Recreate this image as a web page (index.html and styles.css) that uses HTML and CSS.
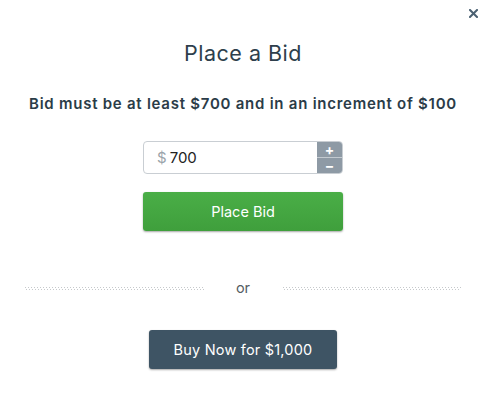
FILE: index.html
```html
<!DOCTYPE html>
<html>
<head>
<meta charset="utf-8">
<link rel="stylesheet" href="styles.css">
</head>
<body>
<div class="modal">
  <button class="close" aria-label="Close">
    <svg width="9" height="9" viewBox="0 0 9 9"><path d="M1 1L8 8M8 1L1 8" stroke="#4b6172" stroke-width="2" stroke-linecap="square"/></svg>
  </button>
  <h1 class="title">Place a Bid</h1>
  <p class="rule">Bid must be at least $700 and in an increment of $100</p>
  <div class="bid-form">
    <div class="amount">
      <span class="currency">$</span>
      <span class="value">700</span>
      <div class="stepper">
        <span class="step">+</span>
        <span class="step minus">&minus;</span>
      </div>
    </div>
    <button class="btn btn-green">Place Bid</button>
  </div>
  <div class="divider">
    <span class="dots"></span>
    <span class="or">or</span>
    <span class="dots"></span>
  </div>
  <div class="buy">
    <button class="btn btn-dark">Buy Now for $1,000</button>
  </div>
</div>
</body>
</html>
```
FILE: styles.css
```css
* { box-sizing: border-box; }
html, body { margin: 0; padding: 0; background: #fff; }
body { font-family: "Inter", "Lato", sans-serif; color: #2d3e4b; }
.modal { position: relative; width: 491px; height: 413px; padding: 40px 5px 0 0; }
.close {
  position: absolute; top: 8px; right: 12px;
  width: 11px; height: 11px; padding: 1px; border: 0; background: none;
  display: flex; align-items: center; justify-content: center;
}
.title {
  margin: 0; text-align: center; font-weight: 400; font-size: 21.5px;
  line-height: 26px; color: #2e3f4c; letter-spacing: 0.5px;
}
.rule {
  margin: 29px 0 0; text-align: center; font-weight: 600; font-size: 15px;
  line-height: 18px; color: #2b3c48; letter-spacing: 0.75px;
}
.bid-form { display: flex; flex-direction: column; align-items: center; margin-top: 28px; }
.amount {
  width: 200px; height: 33px; border: 1px solid #c9ced3; border-radius: 4px;
  display: flex; align-items: center; padding-left: 13px; overflow: hidden;
  font-size: 15px;
}
.currency { color: #9aa3aa; margin-right: 3px; }
.value { color: #222; flex: 1; }
.stepper { width: 25px; height: 100%; display: flex; flex-direction: column; background: #8e9aa5; }
.step {
  flex: 1; display: flex; align-items: center; justify-content: center;
  color: #fff; font-weight: 700; font-size: 14px; line-height: 1;
}
.step.minus { border-top: 1px solid #c3cad0; }
.btn {
  border: 0; border-radius: 3px; color: #fff; font-family: inherit;
  font-size: 14.5px; height: 39px; cursor: pointer;
}
.btn-green {
  margin-top: 18px; width: 200px;
  background: linear-gradient(#4aae47, #3f9f3c);
  box-shadow: 0 1px 2px rgba(0,0,0,0.35);
}
.divider { display: flex; align-items: center; margin: 48px 25px 0 25px; }
.dots {
  flex: 1; height: 3px;
  background:
    linear-gradient(90deg, #c6c9cc 1px, transparent 1px) 0 0 / 3px 1px repeat-x,
    linear-gradient(90deg, #c6c9cc 1px, transparent 1px) 1px 2px / 3px 1px repeat-x;
}
.or { width: 79px; text-align: center; font-size: 14.5px; color: #555d63; line-height: 18px; }
.buy { display: flex; justify-content: center; margin-top: 33px; }
.btn-dark {
  width: 188px; background: #3e5464; letter-spacing: 0.2px;
  box-shadow: 0 1px 2px rgba(0,0,0,0.35);
}
```
